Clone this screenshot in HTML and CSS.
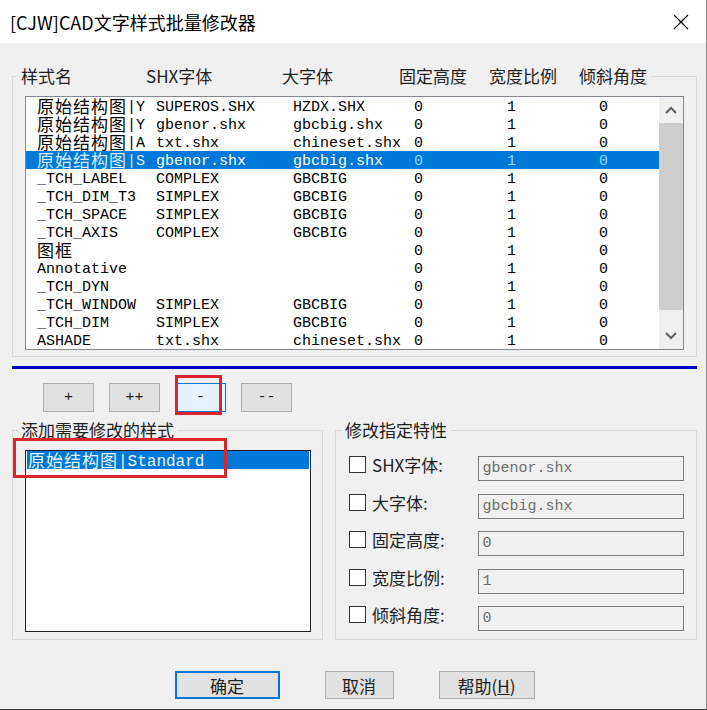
FILE: index.html
```html
<!DOCTYPE html>
<html lang="zh-CN">
<head>
  <meta charset="UTF-8">
  <title>[CJW]CAD文字样式批量修改器</title>
  <link rel="stylesheet" href="styles.css">
</head>
<body>
  <div class="window">
    <div class="titlebar">
      <span class="title">[CJW]CAD文字样式批量修改器</span>
      <svg class="close" width="16" height="16" viewBox="0 0 16 16">
        <path d="M1 1 L15 15 M15 1 L1 15" stroke="#000" stroke-width="1.1" fill="none"/>
      </svg>
    </div>

    <div class="content">
      <fieldset class="group styles-group">
        <legend class="columns">
          <span class="c1">样式名</span><span class="c2">SHX字体</span><span class="c3">大字体</span><span class="c4">固定高度</span><span class="c5">宽度比例</span><span class="c6">倾斜角度</span>
        </legend>
        <div class="listbox style-list">
          <div class="rows" id="rows"></div>
          <div class="scrollbar">
            <div class="scroll-btn">
              <svg width="12" height="8" viewBox="0 0 12 8"><polyline points="1,7 6,2 11,7" fill="none" stroke="#606060" stroke-width="2"/></svg>
            </div>
            <div class="thumb"></div>
            <div class="track"></div>
            <div class="scroll-btn">
              <svg width="12" height="8" viewBox="0 0 12 8"><polyline points="1,1 6,6 11,1" fill="none" stroke="#606060" stroke-width="2"/></svg>
            </div>
          </div>
        </div>
      </fieldset>

      <div class="divider"></div>

      <div class="tools">
        <button class="btn small">+</button>
        <button class="btn small">++</button>
        <button class="btn small active">-</button>
        <button class="btn small">--</button>
      </div>

      <div class="lower">
        <fieldset class="group pick-group">
          <legend>添加需要修改的样式</legend>
          <div class="listbox pick-list">
            <div class="pick-item selected"><span class="han">原始结构图</span>|Standard</div>
          </div>
        </fieldset>

        <fieldset class="group props-group">
          <legend>修改指定特性</legend>
          <div class="prop">
            <label class="check"><span class="box"></span>SHX字体:</label>
            <div class="field">gbenor.shx</div>
          </div>
          <div class="prop">
            <label class="check"><span class="box"></span>大字体:</label>
            <div class="field">gbcbig.shx</div>
          </div>
          <div class="prop">
            <label class="check"><span class="box"></span>固定高度:</label>
            <div class="field">0</div>
          </div>
          <div class="prop">
            <label class="check"><span class="box"></span>宽度比例:</label>
            <div class="field">1</div>
          </div>
          <div class="prop">
            <label class="check"><span class="box"></span>倾斜角度:</label>
            <div class="field">0</div>
          </div>
        </fieldset>
      </div>

      <div class="actions">
        <button class="btn ok">确定</button>
        <button class="btn cancel">取消</button>
        <button class="btn help">帮助(<u>H</u>)</button>
      </div>
    </div>

    <div class="mark mark-minus"></div>
    <div class="mark mark-item"></div>
  </div>

  <script>
    const styles = [
      ["原始结构图|Y", "SUPEROS.SHX", "HZDX.SHX"],
      ["原始结构图|Y", "gbenor.shx", "gbcbig.shx"],
      ["原始结构图|A", "txt.shx", "chineset.shx"],
      ["原始结构图|S", "gbenor.shx", "gbcbig.shx"],
      ["_TCH_LABEL", "COMPLEX", "GBCBIG"],
      ["_TCH_DIM_T3", "SIMPLEX", "GBCBIG"],
      ["_TCH_SPACE", "SIMPLEX", "GBCBIG"],
      ["_TCH_AXIS", "COMPLEX", "GBCBIG"],
      ["图框", "", ""],
      ["Annotative", "", ""],
      ["_TCH_DYN", "", ""],
      ["_TCH_WINDOW", "SIMPLEX", "GBCBIG"],
      ["_TCH_DIM", "SIMPLEX", "GBCBIG"],
      ["ASHADE", "txt.shx", "chineset.shx"]
    ];
    const selectedIndex = 3;

    // chinese runs get their own (wider) font size, like SimSun
    function wrapHan(text) {
      return text.replace(/([\u4e00-\u9fff]+)/g, '<span class="han">$1</span>');
    }

    const rowsBlock = document.getElementById("rows");
    styles.forEach((s, i) => {
      const row = document.createElement("div");
      row.className = "row" + (i === selectedIndex ? " selected" : "");
      const cells = [s[0], s[1], s[2], "0", "1", "0"];
      row.innerHTML = cells
        .map((c, n) => `<span class="cell${n > 2 ? " num" : ""}">${wrapHan(c)}</span>`)
        .join("");
      rowsBlock.appendChild(row);
    });
  </script>
</body>
</html>
```

FILE: styles.css
```css
body {
  margin: 0;
  background: #fff;
  font-family: "Noto Sans CJK SC", sans-serif;
  color: #000;
}

.window {
  width: 707px;
  height: 710px;
  box-sizing: border-box;
  background: #f0f0f0;
  border-right: 1px solid #8a8a8a;
  border-bottom: 1px solid #333;
  position: relative;
  overflow: hidden;
}

.titlebar {
  height: 43px;
  background: #fff;
  display: flex;
  align-items: center;
  justify-content: space-between;
  padding: 0 17px 0 10px;
  font-size: 18px;
}

.content {
  padding: 0 9px 0 12px;
}

/* group boxes */
.group {
  margin: 0;
  border: 1px solid #d9d9d9;
  min-width: 0;
}

.group legend {
  font-size: 17px;
  line-height: 24px;
  padding: 0 4px 0 3px;
  margin-left: -7px;
  color: #222;
  white-space: nowrap;
}

.styles-group {
  margin-top: 21px;
  padding: 8px 12px 6px 12px;
}

.columns span {
  display: inline-block;
}

.columns .c1 { width: 125px; }
.columns .c2 { width: 136px; }
.columns .c3 { width: 117px; }
.columns .c4 { width: 90px; }
.columns .c5 { width: 90px; }

/* list boxes */
.listbox {
  background: #fff;
  box-sizing: border-box;
}

.style-list {
  height: 254px;
  border: 1px solid #828790;
  display: flex;
}

.rows {
  flex: 1;
}

.row {
  display: grid;
  grid-template-columns: 119px 137px 121px 93px 92px 1fr;
  height: 18px;
  padding-left: 11px;
  font-family: "Liberation Mono", "Noto Sans CJK SC", monospace;
  font-size: 15px;
  overflow: hidden;
}

.cell {
  white-space: nowrap;
  overflow: hidden;
  height: 18px;
  line-height: 22px;
}

.han {
  display: inline-block;
  vertical-align: top;
  height: 18px;
  font-family: "Noto Sans CJK SC", sans-serif;
  font-size: 17px;
  letter-spacing: 1px;
  line-height: 18px;
}

.row.selected {
  background: #0078d7;
  color: #fff;
}

.row.selected .cell:first-child {
  color: #d6ecff;
}

.row.selected .num {
  color: #8fd6ff;
}

.scrollbar {
  width: 24px;
  display: flex;
  flex-direction: column;
  background: #f0f0f0;
}

.scroll-btn {
  height: 26px;
  display: flex;
  align-items: center;
  justify-content: center;
}

.thumb {
  height: 187px;
  background: #cdcdcd;
}

.track {
  flex: 1;
}

.divider {
  height: 3px;
  background: #0000c0;
  margin-top: 9px;
}

/* buttons */
.btn {
  font-family: "Noto Sans CJK SC", sans-serif;
  background: #e1e1e1;
  border: 1px solid #adadad;
  color: #222;
  padding: 0;
  cursor: pointer;
}

.tools {
  display: flex;
  gap: 15px;
  padding-left: 31px;
  margin-top: 14px;
}

.btn.small {
  width: 51px;
  height: 29px;
  font-family: "Liberation Mono", monospace;
  font-size: 15px;
}

.btn.small.active {
  background: #e5f1fb;
  border-color: #0078d7;
}

.lower {
  display: flex;
  gap: 12px;
  margin-top: 6px;
}

.pick-group {
  width: 311px;
  box-sizing: border-box;
  padding: 8px 11px 7px 12px;
}

.pick-list {
  height: 182px;
  border: 1px solid #222;
  padding: 0 1px;
}

.pick-item {
  height: 18px;
  line-height: 22px;
  padding-left: 1px;
  font-family: "Liberation Mono", "Noto Sans CJK SC", monospace;
  font-size: 16px;
  white-space: nowrap;
  overflow: hidden;
}

.pick-item.selected {
  background: #0078d7;
  color: #e8f4ff;
}

.props-group {
  flex: 1;
  padding: 14px 12px 6px 13px;
  display: flex;
  flex-direction: column;
  gap: 12.5px;
}

.prop {
  display: flex;
  align-items: flex-start;
  height: 25px;
}

.check {
  display: flex;
  align-items: center;
  width: 129px;
  height: 17px;
  font-size: 17px;
  color: #222;
  gap: 6px;
}

.box {
  width: 17px;
  height: 17px;
  box-sizing: border-box;
  border: 1px solid #333;
  background: #fff;
  flex: none;
}

.field {
  width: 207px;
  height: 25px;
  box-sizing: border-box;
  border: 1px solid #7a7a7a;
  background: #f0f0f0;
  color: #6d6d6d;
  font-family: "Liberation Mono", monospace;
  font-size: 15px;
  line-height: 23px;
  padding-left: 4px;
}

.actions {
  display: flex;
  justify-content: center;
  gap: 45px;
  margin-top: 31px;
}

.actions .btn {
  height: 28px;
  font-size: 17px;
}

.btn.ok {
  width: 105px;
  border: 2px solid #0078d7;
}

.btn.cancel {
  width: 69px;
}

.btn.help {
  width: 96px;
}

/* red annotation frames drawn over the dialog */
.mark {
  position: absolute;
  border: 3px solid #d9252b;
  box-sizing: border-box;
}

.mark-minus {
  left: 175px;
  top: 375px;
  width: 47px;
  height: 40px;
}

.mark-item {
  left: 13px;
  top: 438px;
  width: 214px;
  height: 40px;
}
```
